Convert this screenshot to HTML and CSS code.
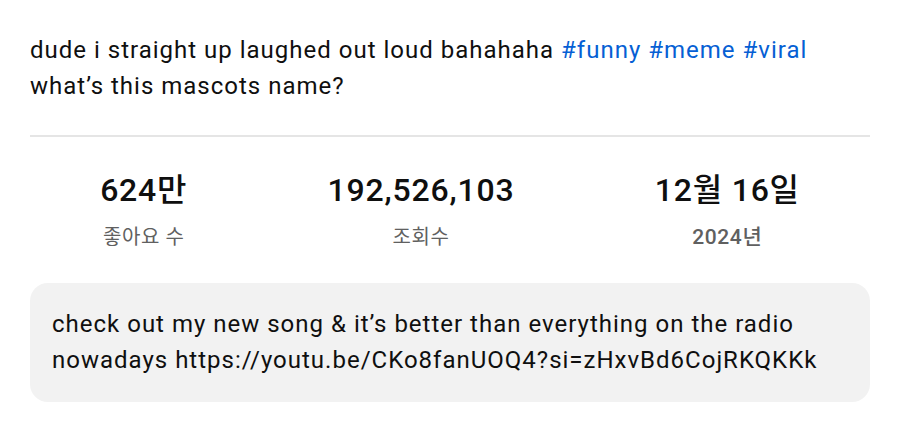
FILE: index.html
```html
<!DOCTYPE html>
<html lang="ko">
<head>
<meta charset="utf-8">
<link rel="stylesheet" href="styles.css">
</head>
<body>
<main class="panel">
  <p class="desc">dude i straight up laughed out loud bahahaha <a class="tag">#funny</a> <a class="tag">#meme</a> <a class="tag">#viral</a><br>what’s this mascots name?</p>
  <hr class="divider">
  <section class="stats">
    <div class="stat">
      <div class="stat-value">624만</div>
      <div class="stat-label">좋아요 수</div>
    </div>
    <div class="stat">
      <div class="stat-value">192,526,103</div>
      <div class="stat-label">조회수</div>
    </div>
    <div class="stat">
      <div class="stat-value">12월 16일</div>
      <div class="stat-label stat-label-strong">2024년</div>
    </div>
  </section>
  <div class="comment">check out my new song &amp; it’s better than everything on the radio nowadays https://youtu.be/CKo8fanUOQ4?si=zHxvBd6CojRKQKKk</div>
</main>
</body>
</html>
```
FILE: styles.css
```css
html, body {
  margin: 0;
  padding: 0;
  background: #ffffff;
}
body {
  font-family: Roboto, "Noto Sans CJK KR", sans-serif;
  color: #0f0f0f;
}
.panel {
  padding: 32px 30px 0 30px;
}
.desc {
  margin: 0;
  font-size: 24px;
  line-height: 36px;
  letter-spacing: 1px;
}
.tag {
  color: #065fd4;
  text-decoration: none;
}
.divider {
  margin: 31px 0 0 0;
  border: 0;
  height: 2px;
  background: #e5e5e5;
}
.stats {
  display: flex;
  justify-content: space-around;
  margin-top: 33px;
}
.stat {
  display: flex;
  flex-direction: column;
  align-items: center;
}
.stat-value {
  font-size: 32px;
  line-height: 40px;
  font-weight: 500;
  letter-spacing: 0.8px;
}
.stat-label {
  margin-top: 13px;
  font-size: 20px;
  line-height: 28px;
  letter-spacing: 0.6px;
  color: #606060;
}
.stat-label-strong {
  font-weight: 500;
  font-size: 21px;
}
.comment {
  margin-top: 32px;
  background: #f2f2f2;
  border-radius: 18px;
  padding: 23px 22px 24px;
  font-size: 24px;
  line-height: 36px;
  letter-spacing: 1px;
}
```
